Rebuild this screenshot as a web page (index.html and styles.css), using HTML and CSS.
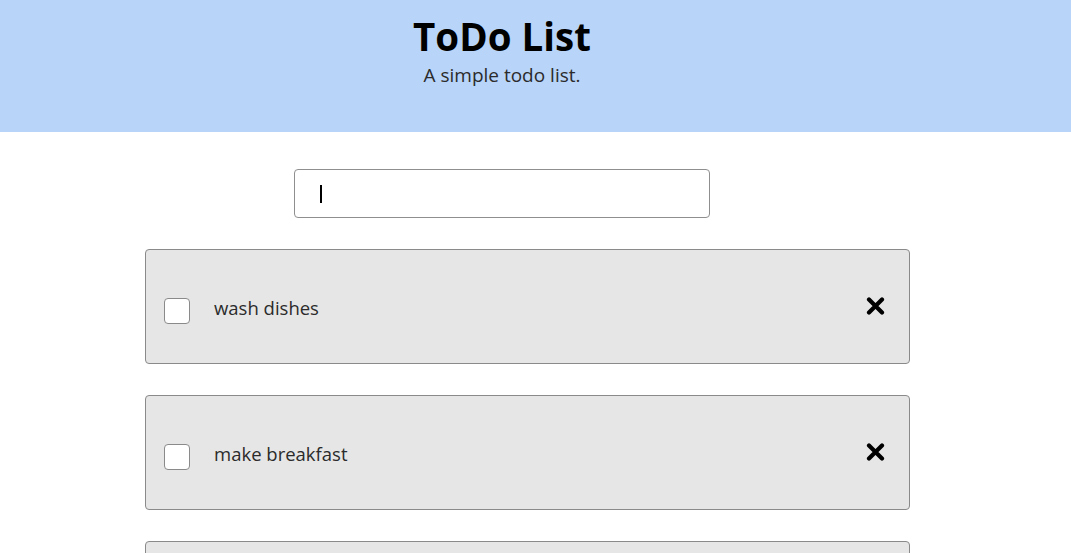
FILE: index.html
```html
<!DOCTYPE html>
<html>
<head>
<meta charset="utf-8">
<link rel="stylesheet" href="styles.css">
</head>
<body>
<header class="hero">
  <div class="hero-inner">
    <h1 class="title">ToDo List</h1>
    <p class="subtitle">A simple todo list.</p>
  </div>
</header>
<main class="main">
  <div class="new-row">
    <div class="new-input"><span class="caret"></span></div>
  </div>
  <ul class="list">
    <li class="card">
      <div class="card-left">
        <span class="check"></span>
        <span class="label">wash dishes</span>
      </div>
      <svg class="remove" width="19" height="18" viewBox="0 0 19 18"><path d="M3 2.5 L16 15.5 M16 2.5 L3 15.5" stroke="#000" stroke-width="4.2" stroke-linecap="round"/></svg>
    </li>
    <li class="card">
      <div class="card-left">
        <span class="check"></span>
        <span class="label">make breakfast</span>
      </div>
      <svg class="remove" width="19" height="18" viewBox="0 0 19 18"><path d="M3 2.5 L16 15.5 M16 2.5 L3 15.5" stroke="#000" stroke-width="4.2" stroke-linecap="round"/></svg>
    </li>
    <li class="card">
      <div class="card-left">
        <span class="check"></span>
        <span class="label">walk the dog</span>
      </div>
      <svg class="remove" width="19" height="18" viewBox="0 0 19 18"><path d="M3 2.5 L16 15.5 M16 2.5 L3 15.5" stroke="#000" stroke-width="4.2" stroke-linecap="round"/></svg>
    </li>
  </ul>
</main>
</body>
</html>
```
FILE: styles.css
```css
html, body {
  margin: 0;
  padding: 0;
  background: #fff;
  font-family: "Open Sans", "Noto Sans", sans-serif;
  color: #222;
}
.hero {
  background: #b8d4f9;
  height: 132px;
  box-sizing: border-box;
  padding-right: 67px;
}
.hero-inner {
  text-align: center;
  padding-top: 10px;
}
.title {
  margin: 0;
  font-size: 38.5px;
  line-height: 52px;
  font-weight: 700;
  color: #000;
}
.subtitle {
  margin: 0;
  font-size: 19px;
  line-height: 26px;
  color: #2b2b2b;
}
.main {
  padding: 37px 161px 0 145px;
}
.new-row {
  padding-left: 149px;
}
.new-input {
  width: 416px;
  height: 49px;
  box-sizing: border-box;
  border: 1px solid #8f8f8f;
  border-radius: 4px;
  background: #fff;
  display: flex;
  align-items: center;
  padding-left: 25px;
}
.caret {
  width: 2px;
  height: 18px;
  background: #000;
}
.list {
  list-style: none;
  margin: 31px 0 0 0;
  padding: 0;
  display: flex;
  flex-direction: column;
  gap: 31px;
}
.card {
  height: 115px;
  box-sizing: border-box;
  background: #e6e6e6;
  border: 1px solid #8a8a8a;
  border-radius: 4px;
  display: flex;
  align-items: center;
  justify-content: space-between;
  padding: 0 24px 0 18px;
}
.card-left {
  display: flex;
  align-items: center;
  gap: 24px;
  padding-top: 2px;
}
.check {
  width: 26px;
  height: 26px;
  box-sizing: border-box;
  background: #fff;
  border: 1px solid #8a8a8a;
  border-radius: 4px;
  margin-top: 6px;
}
.label {
  font-size: 18.5px;
  color: #2b2b2b;
}
.remove {
  display: block;
  margin-top: -2px;
}
```
